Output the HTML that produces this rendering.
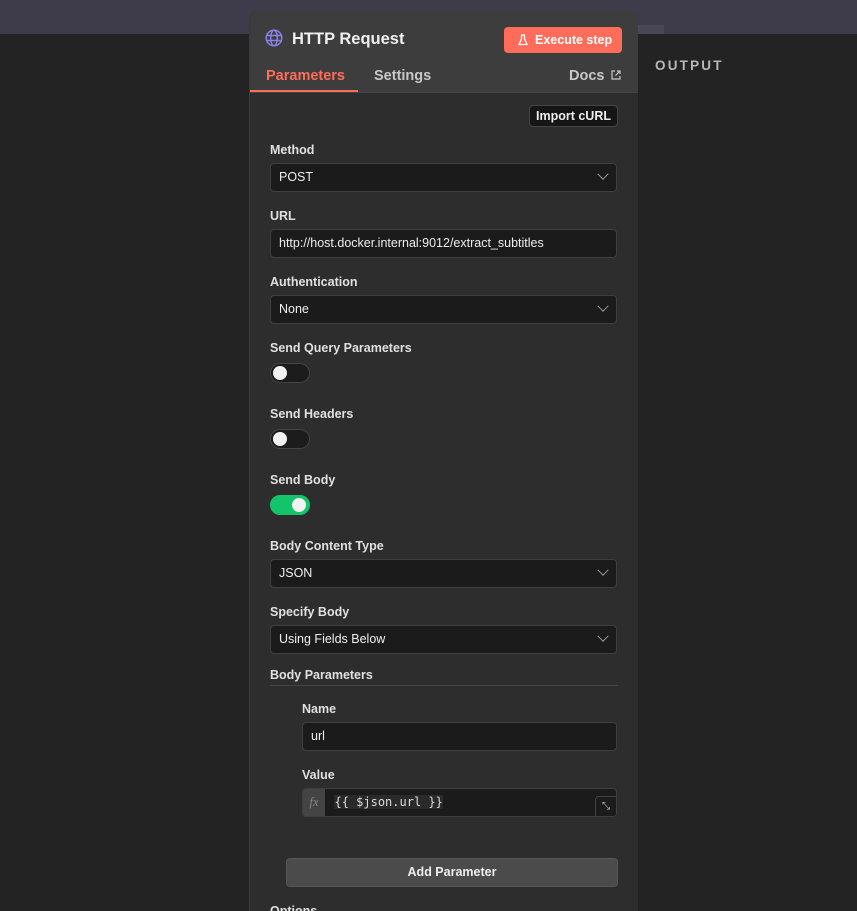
<!DOCTYPE html>
<html><head><meta charset="utf-8"><style>
*{box-sizing:border-box;margin:0;padding:0}
body{width:857px;height:905px;overflow:hidden;background:#232323;font-family:"Liberation Sans",sans-serif;color:#e6e6e6;position:relative}
.top{position:absolute;left:0;top:0;width:857px;height:34px;background:#3e3c4a}
.strip{position:absolute;left:600px;top:25px;width:64px;height:9px;background:#4a4857}
.out{position:absolute;left:655px;top:58px;font-size:13.5px;font-weight:bold;letter-spacing:2.2px;color:#b8b8b8}
.panel{position:absolute;left:249px;top:11px;width:389px;height:900px;background:#2d2d2d;border-radius:8px 8px 0 0;overflow:hidden;border-left:1px solid #3a3a3a}
.head{height:82px;background:#3d3d3d;position:relative;border-bottom:1px solid #444}
.title{position:absolute;left:42px;top:19px;font-size:16.5px;font-weight:bold;color:#f0f0f0}
.globe{position:absolute;left:15px;top:18px}
.exec{position:absolute;left:254px;top:16px;width:118px;height:26px;background:#ff6d5a;border-radius:4px;color:#fff;font-size:12.5px;font-weight:bold;line-height:26px;padding-left:31px}
.tab{position:absolute;top:57px;font-size:14.5px;font-weight:bold;color:#c8c8c8}
.tabline{position:absolute;left:0;top:79px;width:108px;height:2px;background:#ff6d5a}
.lbl{position:absolute;left:20px;font-size:12.5px;font-weight:bold;color:#e0e0e0}
.inp{position:absolute;left:20px;width:347px;height:29px;background:#1b1b1b;border:1px solid #3f3f3f;border-radius:4px;font-size:12.5px;color:#eee;line-height:27px;padding-left:8px}
.chev{position:absolute;right:9px;top:9px;width:8px;height:8px;border-right:1.2px solid #999;border-bottom:1.2px solid #999;transform:rotate(45deg) translate(-2px,-2px)}
.tog{position:absolute;left:20px;width:40px;height:20px;border-radius:10px;background:#1c1c1c;border:1px solid #444}
.tog i{position:absolute;left:2px;top:2px;width:14px;height:14px;border-radius:50%;background:#f2f2f2}
.tog.on{background:#13c46a;border-color:#13c46a}
.tog.on i{left:21px}
</style></head><body>
<div class="top"></div><div class="strip"></div>
<div class="out">OUTPUT</div>
<div class="panel">
 <div class="head">
  <svg class="globe" width="18" height="18" viewBox="0 0 18 18" fill="none" stroke="#8a82e8" stroke-width="1.5"><circle cx="9" cy="9" r="7.8"/><ellipse cx="9" cy="9" rx="3.3" ry="7.8"/><path d="M1.5 6.5h15M1.5 11.5h15"/></svg>
  <div class="title">HTTP Request</div>
  <div class="exec"><svg style="position:absolute;left:14px;top:7px" width="10" height="12" viewBox="0 0 10 12" fill="none" stroke="#fff" stroke-width="1.3"><path d="M3 1h4M3.5 1v4L1 10.5h8L6.5 5V1"/></svg>Execute step</div>
  <div class="tab" style="left:16px;color:#ff6d5a">Parameters</div>
  <div class="tab" style="left:124px">Settings</div>
  <div class="tab" style="left:319px">Docs</div>
  <svg style="position:absolute;left:361px;top:59px" width="10" height="10" viewBox="0 0 10 10" fill="none" stroke="#c8c8c8" stroke-width="1.2"><path d="M4 1H1v8h8V6M6 1h3v3M9 1L4.5 5.5"/></svg>
  <div class="tabline"></div>
 </div>
 <div style="position:absolute;left:279px;top:94px;width:89px;height:22px;background:#161616;border:1px solid #444;border-radius:4px;font-size:12.5px;font-weight:bold;text-align:center;line-height:20px;color:#eee">Import cURL</div>
 <div class="lbl" style="top:132px">Method</div>
 <div class="inp" style="top:152px">POST<span class="chev"></span></div>
 <div class="lbl" style="top:198px">URL</div>
 <div class="inp" style="top:218px">http://host.docker.internal:9012/extract_subtitles</div>
 <div class="lbl" style="top:264px">Authentication</div>
 <div class="inp" style="top:284px">None<span class="chev"></span></div>
 <div class="lbl" style="top:330px">Send Query Parameters</div>
 <div class="tog" style="top:352px"><i></i></div>
 <div class="lbl" style="top:396px">Send Headers</div>
 <div class="tog" style="top:418px"><i></i></div>
 <div class="lbl" style="top:462px">Send Body</div>
 <div class="tog on" style="top:484px"><i></i></div>
 <div class="lbl" style="top:528px">Body Content Type</div>
 <div class="inp" style="top:548px">JSON<span class="chev"></span></div>
 <div class="lbl" style="top:594px">Specify Body</div>
 <div class="inp" style="top:614px">Using Fields Below<span class="chev"></span></div>
 <div class="lbl" style="top:657px">Body Parameters</div>
 <div style="position:absolute;left:20px;top:674px;width:348px;height:1px;background:#444"></div>
 <div class="lbl" style="top:691px;left:52px">Name</div>
 <div class="inp" style="top:711px;left:52px;width:315px">url</div>
 <div class="lbl" style="top:757px;left:52px">Value</div>
 <div class="inp" style="top:777px;left:52px;width:315px;padding-left:0;overflow:hidden">
  <span style="display:inline-block;width:22px;height:27px;background:#444;color:#888;font-family:'Liberation Serif',serif;font-style:italic;text-align:center;vertical-align:top">fx</span>
  <span style="font-family:'DejaVu Sans Mono',monospace;font-size:12px;margin-left:6px;background:#2a2a2a;color:#ddd">{{ $json.url }}</span>
  <span style="position:absolute;right:-1px;top:7px;width:22px;height:21px;border:1px solid #444;border-radius:4px 0 0 0;background:#1b1b1b;font-size:10px;line-height:19px;text-align:center;color:#ccc">⤡</span>
 </div>
 <div style="position:absolute;left:36px;top:847px;width:332px;height:29px;background:#4b4b4b;border:1px solid #555;border-radius:4px;text-align:center;line-height:27px;font-size:12.5px;font-weight:bold;color:#eee">Add Parameter</div>
 <div class="lbl" style="top:893px">Options</div>
</div>
</body></html>
